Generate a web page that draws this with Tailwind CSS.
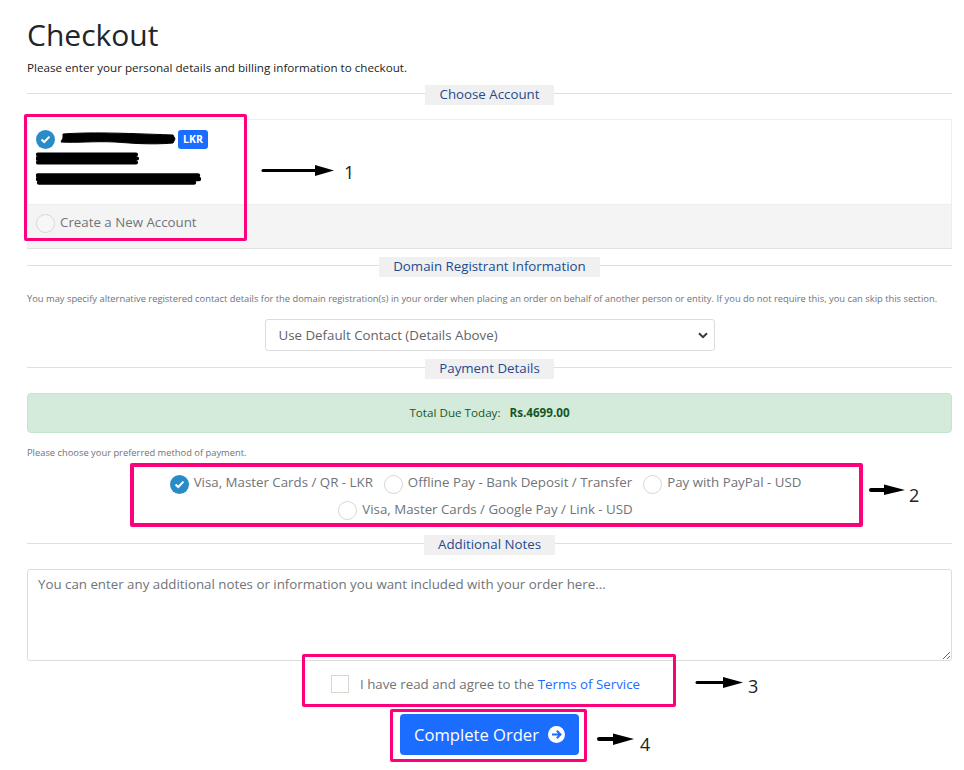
<!DOCTYPE html>
<html lang="en">
<head>
<meta charset="UTF-8" />
<title>Checkout</title>
<script src="https://cdn.jsdelivr.net/npm/@tailwindcss/browser@4"></script>
</head>
<body class="bg-white font-['Open_Sans',sans-serif]">
<div class="relative w-[964px] h-[770px] overflow-hidden pl-[27px] pr-[12px] pt-[16px]">

  <!-- Header -->
  <h1 class="text-[30px] leading-[38px] text-[#212529]">Checkout</h1>
  <p class="mt-[5px] text-[11.65px] leading-[18px] text-[#222]">Please enter your personal details and billing information to checkout.</p>

  <!-- Choose Account -->
  <div class="mt-[8px] h-[20px] flex items-center">
    <div class="flex-1 h-px mb-[3px] bg-[#dfdfdf]"></div>
    <span class="w-[129px] h-[20px] bg-[#f0f0f0] text-center text-[13.3px] leading-[18px] text-[#1d4b91]">Choose Account</span>
    <div class="flex-1 h-px mb-[3px] bg-[#dfdfdf]"></div>
  </div>
  <div class="mt-[14px] h-[130px] border border-[#eeeeee] border-b-[#e2e2e2] flex flex-col">
    <div class="h-[85px] border-b border-[#eeeeee] pl-[8px] pt-[9px]">
      <div class="flex items-center gap-[5px] h-[20px]">
        <span class="w-[19px] h-[19px] rounded-full bg-[#2a8bc9] flex items-center justify-center">
          <svg width="11" height="9" viewBox="0 0 11 9"><path d="M1.5 4.5 4.2 7 9.5 1.6" fill="none" stroke="#fff" stroke-width="2"/></svg>
        </span>
        <svg width="116" height="14" viewBox="0 0 116 14"><path d="M3 2 C30 0 60 1 113 3 L115 7 L113 11 C90 13 70 11 55 10 C35 9 15 11 1 10 L3 6 Z" fill="#000" stroke="#000" stroke-width="1"/></svg>
        <span class="w-[30px] h-[19px] -ml-[3px] rounded-[3px] bg-[#1a6dff] text-white text-[10.5px] font-bold leading-[19px] text-center">LKR</span>
      </div>
      <svg class="block mt-[3px]" width="104" height="14" viewBox="0 0 104 14"><path d="M2 2.500H100M1 6.500H101M2 10.500H100" stroke="#000" stroke-width="4.200" stroke-linecap="round"/></svg>
      <svg class="block mt-[6px]" width="166" height="14" viewBox="0 0 166 14"><path d="M2 3.500H162M2 7H163M3 10.500H158" stroke="#000" stroke-width="4.400" stroke-linecap="round"/></svg>
    </div>
    <div class="flex-1 bg-[#f4f4f4] pl-[8px] pb-[7px] flex items-center gap-[5px]">
      <span class="w-[19px] h-[19px] rounded-full border border-[#d8d8d0] bg-white/30"></span>
      <span class="-mt-[1px] text-[13.3px] text-[#6f7479]">Create a New Account</span>
    </div>
  </div>

  <!-- Domain Registrant Information -->
  <div class="mt-[8px] h-[20px] flex items-center">
    <div class="flex-1 h-px mb-[3px] bg-[#dfdfdf]"></div>
    <span class="w-[221px] h-[20px] bg-[#f0f0f0] text-center text-[13.3px] leading-[18px] text-[#1d4b91]">Domain Registrant Information</span>
    <div class="flex-1 h-px mb-[3px] bg-[#dfdfdf]"></div>
  </div>
  <p class="mt-[14px] text-[9.35px] leading-[16px] whitespace-nowrap text-[#6f7479]">You may specify alternative registered contact details for the domain registration(s) in your order when placing an order on behalf of another person or entity. If you do not require this, you can skip this section.</p>
  <div class="mt-[12px] mx-auto w-[450px] h-[32px] border border-[#dcdcdc] rounded-[3px] flex items-center justify-between pl-[13px] pr-[6px] text-[13.3px] text-[#5f6469]">
    <span class="mt-[1px]">Use Default Contact (Details Above)</span>
    <svg width="10" height="7" viewBox="0 0 10 7"><path d="M1 1.200 5 5.200 9 1.200" fill="none" stroke="#343a40" stroke-width="2"/></svg>
  </div>

  <!-- Payment Details -->
  <div class="mt-[8px] h-[20px] flex items-center">
    <div class="flex-1 h-px mb-[3px] bg-[#dfdfdf]"></div>
    <span class="w-[129px] h-[20px] bg-[#f0f0f0] text-center text-[13.3px] leading-[18px] text-[#1d4b91]">Payment Details</span>
    <div class="flex-1 h-px mb-[3px] bg-[#dfdfdf]"></div>
  </div>
  <div class="mt-[14px] h-[40px] rounded-[4px] border border-[#c3e6cb] bg-[#d4ebdb] flex items-center justify-center gap-[9px] text-[#155724] text-[11.65px]">
    <span>Total Due Today:</span><strong class="font-bold">Rs.4699.00</strong>
  </div>
  <p class="mt-[12px] text-[9.35px] leading-[16px] text-[#6f7479]">Please choose your preferred method of payment.</p>

  <!-- Payment methods -->
  <div class="mt-[10px] h-[52px] pr-[8px] text-[13.3px] text-[#6f7479]">
    <div class="h-[26px] flex items-center justify-center gap-[11px]">
      <label class="flex items-center gap-[5px]">
        <span class="w-[19px] h-[19px] rounded-full bg-[#2a8bc9] flex items-center justify-center">
          <svg width="11" height="9" viewBox="0 0 11 9"><path d="M1.500 4.500 4.200 7 9.500 1.600" fill="none" stroke="#fff" stroke-width="2"/></svg>
        </span>
        <span class="-mt-[3px]">Visa, Master Cards / QR - LKR</span>
      </label>
      <label class="flex items-center gap-[5px]">
        <span class="w-[19px] h-[19px] rounded-full border border-[#d8d8d0]"></span>
        <span class="-mt-[3px]">Offline Pay - Bank Deposit / Transfer</span>
      </label>
      <label class="flex items-center gap-[5px]">
        <span class="w-[19px] h-[19px] rounded-full border border-[#d8d8d0]"></span>
        <span class="-mt-[3px]">Pay with PayPal - USD</span>
      </label>
    </div>
    <div class="h-[26px] flex items-center justify-center">
      <label class="flex items-center gap-[5px]">
        <span class="w-[19px] h-[19px] rounded-full border border-[#d8d8d0]"></span>
        <span class="-mt-[1px]">Visa, Master Cards / Google Pay / Link - USD</span>
      </label>
    </div>
  </div>

  <!-- Additional Notes -->
  <div class="mt-[12px] h-[20px] flex items-center">
    <div class="flex-1 h-px mb-[3px] bg-[#dfdfdf]"></div>
    <span class="w-[131px] h-[20px] bg-[#f0f0f0] text-center text-[13.3px] leading-[18px] text-[#1d4b91]">Additional Notes</span>
    <div class="flex-1 h-px mb-[3px] bg-[#dfdfdf]"></div>
  </div>
  <textarea class="block mt-[14px] w-[925px] h-[92px] border border-[#dcdcdc] rounded-[3px] px-[10px] py-[4px] text-[13.3px] leading-[20px] placeholder:text-[#6f7479]" placeholder="You can enter any additional notes or information you want included with your order here..."></textarea>

  <!-- Terms -->
  <div class="mt-[13px] h-[20px] flex items-center justify-center gap-[11px] pr-[8px] text-[13.3px] text-[#6f7479]">
    <span class="w-[18px] h-[18px] border border-[#d8d8d0]"></span>
    <span class="mt-[1px]">I have read and agree to the <a class="text-[#1a6dff]">Terms of Service</a></span>
  </div>

  <!-- Submit -->
  <div class="mt-[20px] flex justify-center">
    <button class="w-[179px] h-[41px] rounded-[4px] bg-[#1a6dff] text-white text-[16.6px] flex items-center justify-center gap-[9px]">
      <span class="mt-[1px]">Complete Order</span>
      <svg width="17" height="17" viewBox="0 0 17 17"><circle cx="8.500" cy="8.500" r="8.500" fill="#fff"/><path d="M4 8.500H12M8.800 4.800 12.500 8.500 8.800 12.200" fill="none" stroke="#1a6dff" stroke-width="2"/></svg>
    </button>
  </div>

  <!-- Annotations drawn over the page -->
  <div class="absolute left-[24px] top-[114px] w-[223px] h-[127px] border-[3px] border-[#fe007c] rounded-[2px]"></div>
  <div class="absolute left-[130px] top-[463px] w-[733px] h-[64px] border-[4px] border-[#fe007c] rounded-[2px]"></div>
  <div class="absolute left-[302px] top-[654px] w-[374px] h-[53px] border-[3px] border-[#fe007c] rounded-[2px]"></div>
  <div class="absolute left-[390px] top-[709px] w-[197px] h-[53px] border-[3px] border-[#fe007c] rounded-[2px]"></div>

  <svg class="absolute left-0 top-0 pointer-events-none" width="964" height="770" viewBox="0 0 964 770">
    <path d="M263 170.500H316" stroke="#000" stroke-width="3" stroke-linecap="round"/><path d="M315 165 334 170.500 315 176Z" fill="#000"/>
    <path d="M871 490H886" stroke="#000" stroke-width="4" stroke-linecap="round"/><path d="M884 484.500 905 490 884 495Z" fill="#000"/>
    <path d="M697 682.500H725" stroke="#000" stroke-width="3" stroke-linecap="round"/><path d="M723 677 743 682.500 723 688Z" fill="#000"/>
    <path d="M599 739H617" stroke="#000" stroke-width="4" stroke-linecap="round"/><path d="M613 733.500 634 739 613 745Z" fill="#000"/>
  </svg>
  <span class="absolute left-[344px] top-[161px] text-[18px] leading-[22px] text-[#222]">1</span>
  <span class="absolute left-[909px] top-[484px] text-[18px] leading-[22px] text-[#222]">2</span>
  <span class="absolute left-[748px] top-[675px] text-[18px] leading-[22px] text-[#222]">3</span>
  <span class="absolute left-[640px] top-[733px] text-[18px] leading-[22px] text-[#222]">4</span>
</div>
</body>
</html>
